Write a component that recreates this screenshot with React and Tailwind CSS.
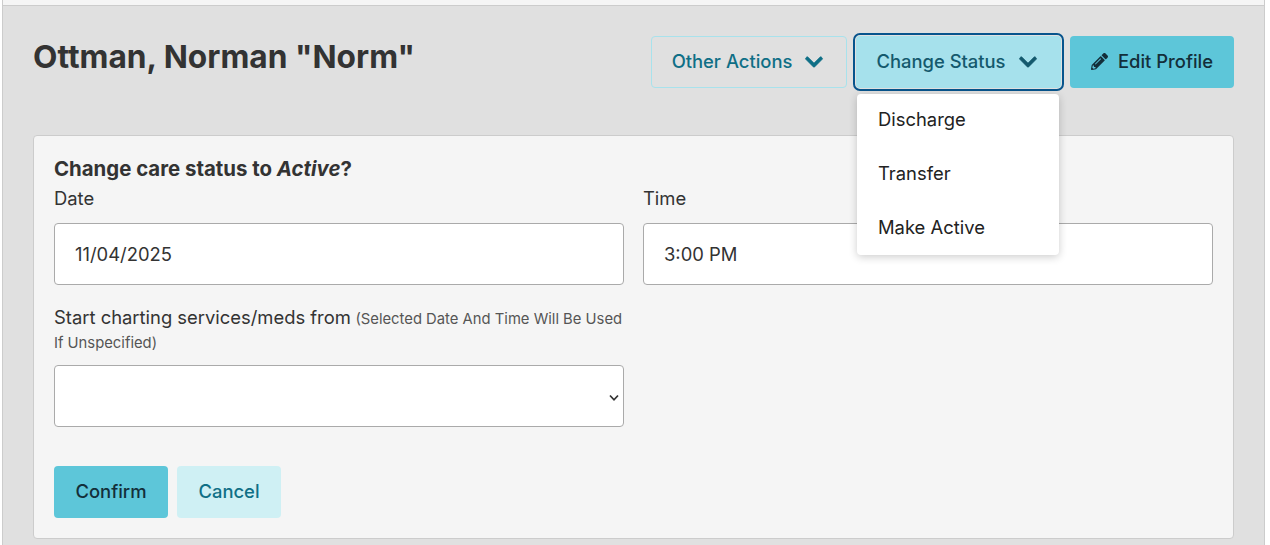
import React from "react";
import { FaChevronDown, FaPencilAlt } from "react-icons/fa";

export default function App() {
  return (
    <div className="h-[545px] w-[1270px] overflow-hidden bg-white font-['Inter',sans-serif] text-[#333333]">
      <div className="mr-[5px] ml-[2px] h-[545px] border-x border-[#cccccc] bg-[#e0e0e0]">
        <div className="h-[6px] border-b border-[#cccccc] bg-[#f5f5f5]" />
        <div className="px-[30px] pt-[30px]">
          <div className="flex h-[99px] items-start justify-between">
            <h1 className="text-[31.7px] leading-[42px] font-bold text-[#333333]">Ottman, Norman "Norm"</h1>
            <div className="relative flex items-start">
              <button className="flex h-[52px] w-[196px] items-center justify-center gap-[12px] rounded border border-[#a8e2ec] pr-[2px] pb-[1px] text-[18.4px] font-medium text-[#0f6f86]">
                Other Actions
                <FaChevronDown className="size-[20px] stroke-[16px]" />
              </button>
              <button className="mx-[9px] flex h-[52px] w-[205px] items-center justify-center gap-[12px] rounded bg-[#a6e1ec] pr-[3px] pb-[1px] text-[18.4px] font-medium text-[#14596d] outline-2 outline-offset-[1px] outline-[#07548c]">
                Change Status
                <FaChevronDown className="size-[20px] stroke-[16px]" />
              </button>
              <button className="flex h-[52px] w-[164px] items-center justify-center gap-[10px] rounded bg-[#5dc6d9] pb-[1px] text-[18.4px] font-medium text-[#132f3a]">
                <FaPencilAlt className="size-[17px]" />
                Edit Profile
              </button>
              <div className="absolute top-[58px] left-[206px] z-10 flex h-[161px] w-[202px] flex-col rounded bg-white text-[18.4px] text-[#222222] shadow-[0_2px_8px_rgba(0,0,0,0.2)]">
                <div className="flex h-[54px] shrink-0 items-center px-[21px] pb-[3px]">Discharge</div>
                <div className="flex h-[54px] shrink-0 items-center px-[21px] pb-[3px]">Transfer</div>
                <div className="flex h-[53px] shrink-0 items-center px-[21px] pb-[2px]">Make Active</div>
              </div>
            </div>
          </div>
          <div className="h-[404px] w-[1201px] rounded border border-[#cccccc] bg-[#f5f5f5] px-[20px] pt-[18px]">
            <h2 className="mb-[2px] text-[20.4px] leading-[29px] font-bold">
              Change care status to <em>Active</em>?
            </h2>
            <div className="grid grid-cols-[570px_570px] gap-x-[19px]">
              <div>
                <label className="block text-[18.4px] leading-[26px]">Date</label>
                <input readOnly value="11/04/2025" className="mt-[12px] block h-[62px] w-full rounded border border-[#aaaaaa] bg-white px-[20px] text-[18.4px] text-[#333333]" />
              </div>
              <div>
                <label className="block text-[18.4px] leading-[26px]">Time</label>
                <input readOnly value="3:00 PM" className="mt-[12px] block h-[62px] w-full rounded border border-[#aaaaaa] bg-white px-[20px] text-[18.4px] text-[#333333]" />
              </div>
            </div>
            <div className="mt-[21px] w-[570px]">
              <label className="block leading-[23px]">
                <span className="text-[18.4px]">Start charting services/meds from</span>{" "}
                <span className="text-[14.8px] text-[#555555]">(Selected Date And Time Will Be Used If Unspecified)</span>
              </label>
              <div className="relative mt-[10px]">
                <select className="block h-[62px] w-full appearance-none rounded border border-[#aaaaaa] bg-white" />
                <svg className="pointer-events-none absolute top-[28px] right-[5px] size-[10px]" viewBox="0 0 10 10" fill="none" stroke="#333333" strokeWidth="1.7">
                  <path d="M1 2.5 5 6.8 9 2.5" />
                </svg>
              </div>
            </div>
            <div className="mt-[39px] flex gap-[9px]">
              <button className="h-[52px] w-[114px] rounded bg-[#5dc6d9] text-[18.4px] font-medium text-[#132f3a]">Confirm</button>
              <button className="h-[52px] w-[104px] rounded bg-[#cff0f4] text-[18.4px] font-medium text-[#0f6f86]">Cancel</button>
            </div>
          </div>
        </div>
      </div>
    </div>
  );
}
